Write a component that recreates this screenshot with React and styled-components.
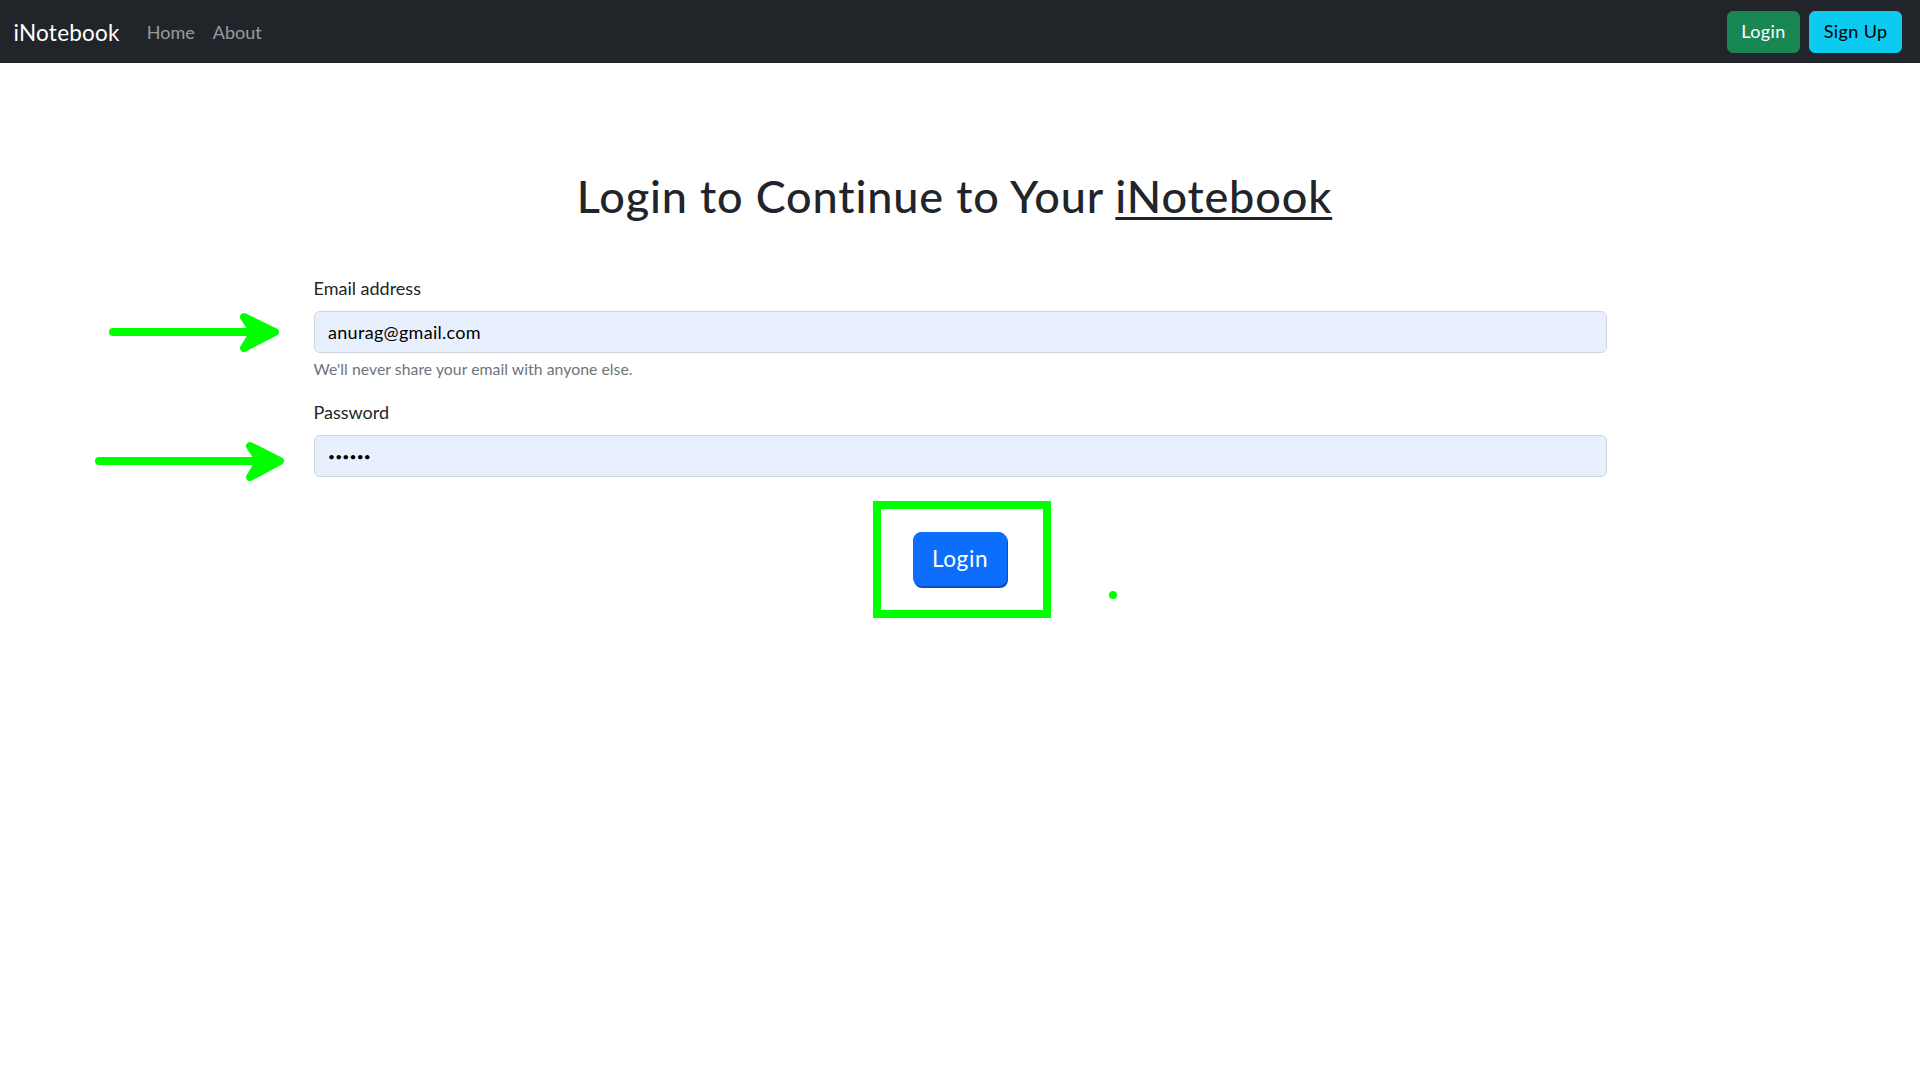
import React from "react";
import styled, { createGlobalStyle } from "styled-components";

const GlobalStyle = createGlobalStyle`
  body {
    margin: 0;
    background: #fff;
    font-family: "Lato", "Open Sans", sans-serif;
    color: #212529;
  }
`;

function Navbar() {
  return (
    <NavbarContainer>
      <Brand href="#">iNotebook</Brand>
      <NavLinks>
        <NavLink href="#">Home</NavLink>
        <NavLink href="#">About</NavLink>
      </NavLinks>
      <NavRight>
        <NavButton variant="success">Login</NavButton>
        <NavButton variant="info">Sign Up</NavButton>
      </NavRight>
    </NavbarContainer>
  );
}

function Annotations() {
  return (
    <Overlay viewBox="0 0 1920 1080" width="1920" height="1080">
      <g fill="#00ff00" stroke="#00ff00" strokeWidth="8" strokeLinecap="round" strokeLinejoin="round">
        {/* email arrow */}
        <line x1="113" y1="332" x2="268" y2="332" />
        <path d="M244 317 L275 332 L244 348 L254 332 Z" />
        {/* password arrow */}
        <line x1="99" y1="461" x2="272" y2="461" />
        <path d="M250 446 L280 461 L250 477 L260 461 Z" />
      </g>
      <rect x="877" y="505" width="170" height="109" fill="none" stroke="#00ff00" strokeWidth="8" />
      <circle cx="1113" cy="595" r="4" fill="#00ff00" />
    </Overlay>
  );
}

function App() {
  return (
    <Page>
      <GlobalStyle />
      <Navbar />
      <Container>
        <Heading>
          Login to Continue to Your <HeadingLink href="#">iNotebook</HeadingLink>
        </Heading>
        <Form onSubmit={(e) => e.preventDefault()}>
          <Field>
            <Label htmlFor="email">Email address</Label>
            <Input id="email" type="email" defaultValue="anurag@gmail.com" />
            <HelpText>We'll never share your email with anyone else.</HelpText>
          </Field>
          <Field>
            <Label htmlFor="password">Password</Label>
            <Input id="password" type="password" defaultValue="123456" masked />
          </Field>
          <SubmitRow>
            <SubmitButton type="submit">Login</SubmitButton>
          </SubmitRow>
        </Form>
      </Container>
      <Annotations />
    </Page>
  );
}

export default App;

const Page = styled.div`
  position: relative;
  min-height: 100vh;
`;

const NavbarContainer = styled.nav`
  display: flex;
  align-items: center;
  height: 63px;
  box-sizing: border-box;
  padding: 0 13.5px;
  background-color: #212529;
`;

const Brand = styled.a`
  margin-right: 18px;
  padding-top: 2px;
  font-size: 22.5px;
  letter-spacing: 0.25px;
  color: #fff;
  text-decoration: none;
`;

const NavLinks = styled.div`
  display: flex;
  align-items: center;
  padding-top: 1px;
`;

const NavLink = styled.a`
  padding: 0 9px;
  font-size: 18px;
  line-height: 27px;
  color: rgba(255, 255, 255, 0.55);
  text-decoration: none;
`;

const NavRight = styled.div`
  display: flex;
  align-items: center;
  margin-left: auto;
`;

const NavButton = styled.button`
  margin: 0 4.5px;
  height: 42px;
  padding: 0 13.5px;
  border: 1px solid ${(p) => (p.variant === "success" ? "#198754" : "#0dcaf0")};
  border-radius: 6px;
  background-color: ${(p) => (p.variant === "success" ? "#198754" : "#0dcaf0")};
  color: ${(p) => (p.variant === "success" ? "#fff" : "#000")};
  font-family: inherit;
  font-size: 18px;
  line-height: 27px;
  letter-spacing: 0.4px;
  cursor: pointer;
`;

const Container = styled.main`
  width: 1293px;
  margin: 0 auto;
`;

const Heading = styled.h1`
  margin: 105.5px 0 0;
  padding-right: 11px;
  text-align: center;
  font-size: 45px;
  font-weight: 500;
  line-height: 54px;
  letter-spacing: 0.85px;
`;

const HeadingLink = styled.a`
  color: #212529;
  text-decoration: underline;
  text-decoration-thickness: 3px;
  text-underline-offset: 4px;
`;

const Form = styled.form`
  margin-top: 52px;
`;

const Field = styled.div`
  margin-bottom: 18px;
`;

const Label = styled.label`
  display: block;
  margin-bottom: 9.5px;
  font-size: 18px;
  line-height: 27px;
  color: #212529;
`;

const Input = styled.input.withConfig({
  shouldForwardProp: (prop) => prop !== "masked",
})`
  display: block;
  width: 100%;
  height: 42px;
  box-sizing: border-box;
  padding: 0 13.5px;
  border: 1px solid #ced4da;
  border-radius: 6px;
  background-color: #e8f0fe;
  color: #000;
  font-family: inherit;
  font-size: ${(p) => (p.masked ? "12px" : "18px")};
  letter-spacing: ${(p) => (p.masked ? "0.2px" : "0.3px")};
  outline: none;
`;

const HelpText = styled.div`
  margin-top: 4px;
  font-size: 15.75px;
  line-height: 23.6px;
  letter-spacing: 0.05px;
  color: #6c757d;
`;

const SubmitRow = styled.div`
  display: flex;
  justify-content: center;
  padding-top: 37px;
`;

const SubmitButton = styled.button`
  padding: 9px 18px;
  border: 1px solid #0d6efd;
  border-radius: 8px;
  background-color: #0d6efd;
  box-shadow: 1px 2px 0 #0a4fb8;
  color: #fff;
  font-family: inherit;
  font-size: 22.5px;
  line-height: 33.75px;
  letter-spacing: 0.6px;
  cursor: pointer;
`;

const Overlay = styled.svg`
  position: absolute;
  top: 0;
  left: 0;
  pointer-events: none;
`;
